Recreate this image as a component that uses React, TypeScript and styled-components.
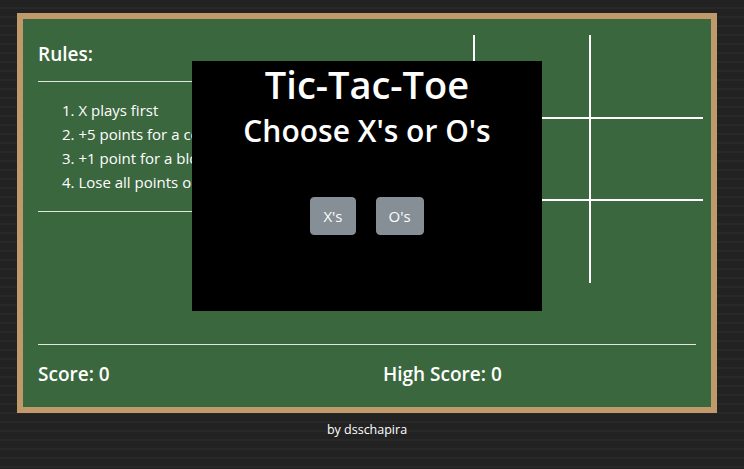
import React from "react";
import styled, { createGlobalStyle } from "styled-components";

const Global = createGlobalStyle`
  html, body {
    margin: 0;
    padding: 0;
  }
  body {
    background-color: #222222;
    background-image: repeating-linear-gradient(
      180deg,
      #222222 0px,
      #222222 7px,
      #282828 7px,
      #282828 9px
    );
    font-family: "Open Sans", "Noto Sans", sans-serif;
    color: #ffffff;
    min-height: 469px;
  }
`;

const Page = styled.div`
  padding: 13px 0 0 17px;
  width: 700px;
`;

const Board = styled.div`
  position: relative;
  box-sizing: border-box;
  width: 700px;
  height: 400px;
  border: 6px solid #c19a6b;
  background: #3b673e;
  padding: 16px 8px 0 15px;
  display: flex;
  flex-direction: column;
`;

const TopRow = styled.div`
  display: flex;
  justify-content: space-between;
  align-items: flex-start;
`;

const RulesCol = styled.div`
  width: 330px;
  padding-top: 7px;
`;

const Heading = styled.div`
  font-size: 19px;
  line-height: 24px;
  font-weight: 600;
`;

const Rule = styled.hr<{ $top: number; $bottom: number }>`
  border: 0;
  border-top: 1px solid #dfe7df;
  margin: ${(p) => `${p.$top}px 0 ${p.$bottom}px`};
  height: 0;
`;

const RuleList = styled.ol`
  margin: 0;
  padding: 0 0 0 24px;
  list-style-position: inside;
  font-size: 15px;
  line-height: 24px;
`;

const Grid = styled.div`
  width: 344px;
  height: 248px;
  display: grid;
  grid-template-columns: 116px 116px 112px;
  grid-template-rows: 84px 82px 82px;
`;

const Cell = styled.div<{ $right: boolean; $bottom: boolean }>`
  border-right: ${(p) => (p.$right ? "2px solid #ffffff" : "0")};
  border-bottom: ${(p) => (p.$bottom ? "2px solid #ffffff" : "0")};
`;

const Footer = styled.div`
  margin-top: auto;
  margin-right: 7px;
  padding-bottom: 21px;
`;

const Scores = styled.div`
  display: grid;
  grid-template-columns: 345px 1fr;
  font-size: 19px;
  line-height: 24px;
  font-weight: 600;
`;

const Modal = styled.div`
  position: absolute;
  left: 169px;
  top: 42px;
  width: 350px;
  height: 250px;
  background: #000000;
  display: flex;
  flex-direction: column;
  align-items: center;
`;

const Title = styled.h1`
  margin: 0;
  font-size: 38px;
  line-height: 46px;
  font-weight: 600;
`;

const Subtitle = styled.h2`
  margin: 6px 0 0;
  font-size: 30px;
  line-height: 36px;
  font-weight: 600;
`;

const Buttons = styled.div`
  display: flex;
  gap: 20px;
  margin-top: 48px;
`;

const ChoiceButton = styled.button`
  font-family: inherit;
  font-size: 15px;
  line-height: 24px;
  padding: 6px 12px;
  border: 1px solid #868e96;
  border-radius: 4px;
  background: #868e96;
  color: #ffffff;
  cursor: pointer;
`;

const Credit = styled.div`
  text-align: center;
  font-size: 12.5px;
  line-height: 20px;
  margin-top: 7px;
`;

const rules = [
  "X plays first",
  "+5 points for a completed row",
  "+1 point for a block",
  "Lose all points on a loss",
];

export default function App() {
  const cells = Array.from({ length: 9 }, (_, i) => i);
  return (
    <>
      <Global />
      <Page>
        <Board>
          <TopRow>
            <RulesCol>
              <Heading>Rules:</Heading>
              <Rule $top={15} $bottom={16} />
              <RuleList>
                {rules.map((r) => (
                  <li key={r}>{r}</li>
                ))}
              </RuleList>
              <Rule $top={17} $bottom={0} />
            </RulesCol>
            <Grid>
              {cells.map((i) => (
                <Cell key={i} $right={i % 3 !== 2} $bottom={i < 6} />
              ))}
            </Grid>
          </TopRow>
          <Footer>
            <Rule $top={0} $bottom={17} />
            <Scores>
              <div>Score: 0</div>
              <div>High Score: 0</div>
            </Scores>
          </Footer>
          <Modal>
            <Title>Tic-Tac-Toe</Title>
            <Subtitle>Choose X's or O's</Subtitle>
            <Buttons>
              <ChoiceButton>X's</ChoiceButton>
              <ChoiceButton>O's</ChoiceButton>
            </Buttons>
          </Modal>
        </Board>
        <Credit>by dsschapira</Credit>
      </Page>
    </>
  );
}
